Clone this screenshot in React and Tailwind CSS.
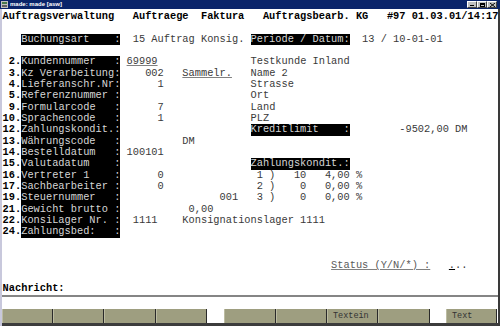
import React from "react";

const STY = {
  b: "font-bold text-black",
  l: "bg-black text-[#d6d6d6]",
  v: "text-[#3a3a3a]",
  u: "text-[#3a3a3a] underline decoration-[#808080] underline-offset-[1px]",
  s: "text-[#5a5a5a] underline decoration-[#808080] underline-offset-[1px]",
  c: "text-[#3a3a3a] underline decoration-black underline-offset-[1px]",
};

const ROWS = [
  [[0, "Auftragsverwaltung", "b"], [21, "Auftraege", "b"], [32, "Faktura", "b"], [42, "Auftragsbearb.", "b"], [57, "KG", "b"], [62, "#97", "b"], [66, "01.03.01/14:17", "b"]],
  [],
  [[3, "Buchungsart    :", "l"], [21, "15 Auftrag Konsig.", "v"], [40, "Periode / Datum:", "l"], [58, "13 / 10-01-01", "v"]],
  [],
  [[1, "2.", "b"], [3, "Kundennummer   :", "l"], [20, "69999", "u"], [40, "Testkunde Inland", "v"]],
  [[1, "3.", "b"], [3, "Kz Verarbeitung:", "l"], [23, "002", "v"], [29, "Sammelr.", "u"], [40, "Name 2", "v"]],
  [[1, "4.", "b"], [3, "Lieferanschr.Nr:", "l"], [25, "1", "v"], [40, "Strasse", "v"]],
  [[1, "5.", "b"], [3, "Referenznummer :", "l"], [40, "Ort", "v"]],
  [[1, "9.", "b"], [3, "Formularcode   :", "l"], [25, "7", "v"], [40, "Land", "v"]],
  [[0, "10.", "b"], [3, "Sprachencode   :", "l"], [25, "1", "v"], [40, "PLZ", "v"]],
  [[0, "12.", "b"], [3, "Zahlungskondit.:", "l"], [40, "Kreditlimit    :", "l"], [64, "-9502,00 DM", "v"]],
  [[0, "13.", "b"], [3, "Währungscode   :", "l"], [29, "DM", "v"]],
  [[0, "14.", "b"], [3, "Bestelldatum   :", "l"], [20, "100101", "v"]],
  [[0, "15.", "b"], [3, "Valutadatum    :", "l"], [40, "Zahlungskondit.:", "l"]],
  [[0, "16.", "b"], [3, "Vertreter 1    :", "l"], [25, "0", "v"], [40, " 1 )   10   4,00 %", "v"]],
  [[0, "17.", "b"], [3, "Sachbearbeiter :", "l"], [25, "0", "v"], [40, " 2 )    0   0,00 %", "v"]],
  [[0, "19.", "b"], [3, "Steuernummer   :", "l"], [35, "001", "v"], [40, " 3 )    0   0,00 %", "v"]],
  [[0, "21.", "b"], [3, "Gewicht brutto :", "l"], [30, "0,00", "v"]],
  [[0, "22.", "b"], [3, "KonsiLager Nr. :", "l"], [21, "1111", "v"], [29, "Konsignationslager 1111", "v"]],
  [[0, "24.", "b"], [3, "Zahlungsbed:   :", "l"]],
  [],
  [],
  [[53, "Status (Y/N/*) :", "s"], [72, ".", "c"], [73, "..", "v"]],
  [],
  [[0, "Nachricht:", "b"]],
];

function Row({ items }) {
  const parts = [];
  let col = 0;
  items.forEach(([c, t, s], i) => {
    if (c > col) parts.push(<span key={"s" + i}>{" ".repeat(c - col)}</span>);
    parts.push(
      <span key={"t" + i} className={STY[s]}>
        {t}
      </span>
    );
    col = c + t.length;
  });
  return <div className="flex h-[11.33px] leading-[11.33px] whitespace-pre">{parts.length ? parts : " "}</div>;
}

const BUTTONS = [
  { w: "w-[51px]", t: "" },
  { w: "w-[51px]", t: "" },
  { w: "w-[52px]", t: "" },
  { w: "w-[51px]", t: "" },
  { gap: "w-[17px]" },
  { w: "w-[52px]", t: "" },
  { w: "w-[51px]", t: "" },
  { w: "w-[51px]", t: "Textein" },
  { w: "w-[52px]", t: "" },
  { gap: "w-[16px]" },
  { w: "w-[51px]", t: "Text" },
];

export default function App() {
  return (
    <div className="w-[500px] h-[326px] overflow-hidden bg-white flex flex-col">
      {/* title bar */}
      <div className="h-[9px] bg-[#0a246a] flex items-center shrink-0">
        <svg width="7" height="7" viewBox="0 0 7 7" className="ml-[1px]">
          <rect x="0" y="0" width="7" height="7" fill="#c0c0c0" />
          <rect x="1" y="1" width="5" height="2" fill="#4a7a4a" />
          <rect x="1" y="4" width="5" height="2" fill="#606060" />
        </svg>
        <span className="ml-[2px] text-white font-bold text-[6px] leading-[9px] [font-family:'Liberation_Sans',sans-serif]">
          made: made [asw]
        </span>
        <div className="ml-auto mr-[3px] flex gap-0">
          <div className="w-[10px] h-[7px] bg-[#c0c0c0] border border-t-white border-l-white border-r-[#404040] border-b-[#404040] flex items-end justify-center pb-[1px]">
            <div className="w-[4px] h-[1px] bg-black" />
          </div>
          <div className="w-[10px] h-[7px] bg-[#c0c0c0] border border-t-white border-l-white border-r-[#404040] border-b-[#404040] flex items-center justify-center">
            <div className="w-[5px] h-[4px] border border-black border-t-2" />
          </div>
          <div className="w-[10px] h-[7px] bg-[#c0c0c0] border border-t-white border-l-white border-r-[#404040] border-b-[#404040] flex items-center justify-center">
            <svg width="5" height="4" viewBox="0 0 5 4">
              <path d="M0 0L5 4M5 0L0 4" stroke="black" strokeWidth="1" />
            </svg>
          </div>
        </div>
      </div>

      <div className="flex-1 flex min-h-0">
        <div className="w-[2px] bg-[#c8c8dc] shrink-0" />
        <div className="flex-1 min-w-0 flex flex-col">
          <div className="pt-[2px] pl-[0.6px] text-[10.33px] [font-family:'Liberation_Mono',monospace]">
            {ROWS.map((r, i) => (
              <Row key={i} items={r} />
            ))}
          </div>
          <div className="h-[2px] bg-[#858585] mt-[1px]" />
          <div className="h-[12px]" />
          <div className="flex h-[14px]">
            {BUTTONS.map((b, i) =>
              b.gap ? (
                <div key={i} className={b.gap} />
              ) : (
                <div
                  key={i}
                  className={`${b.w} h-full bg-[#9e9e80] border-r border-[#2a2a2a] border-l border-l-[#bcbca2] flex items-center pl-[5px] text-[8.5px] text-[#333] [font-family:'Liberation_Mono',monospace]`}
                >
                  {b.t}
                </div>
              )
            )}
          </div>
          <div className="flex-1 bg-[#3c3c3c]" />
        </div>
        <div className="w-[2px] bg-[#3a3a3a] shrink-0" />
      </div>
    </div>
  );
}
